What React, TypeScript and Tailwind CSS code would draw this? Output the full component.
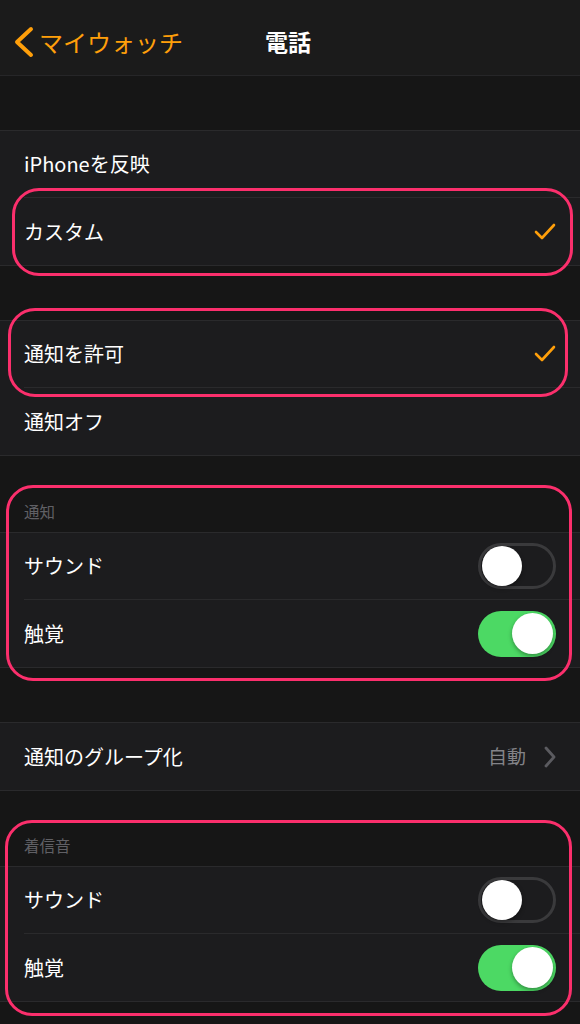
const font = { fontFamily: '"Noto Sans CJK JP", "Noto Sans", sans-serif' };

function Check() {
  return (
    <svg width="22" height="18" viewBox="0 0 22 18" fill="none">
      <polyline points="2,9 8,15 20,2" stroke="#ff9f0a" strokeWidth="2.6" strokeLinecap="round" strokeLinejoin="round" />
    </svg>
  );
}

function Toggle({ on }: { on: boolean }) {
  if (on) {
    return (
      <div className="flex h-[46px] w-[78px] items-center justify-end rounded-full bg-[#4cd964] px-[3px]">
        <div className="h-[41px] w-[41px] rounded-full bg-white shadow-[0_2px_4px_rgba(0,0,0,0.35)]" />
      </div>
    );
  }
  return (
    <div className="flex h-[46px] w-[78px] items-center justify-start rounded-full border-[3px] border-[#3a3a3c] px-[1px]">
      <div className="h-[40px] w-[40px] rounded-full bg-white shadow-[0_2px_4px_rgba(0,0,0,0.35)]" />
    </div>
  );
}

function Row({ label, right, last }: { label: string; right?: React.ReactNode; last?: boolean }) {
  return (
    <div className="pl-6">
      <div className={`flex h-[67px] items-center justify-between pr-6 ${last ? "" : "border-b border-[#2a2a2c]"}`}>
        <span className="text-[20px] text-white">{label}</span>
        {right}
      </div>
    </div>
  );
}

function Group({ children }: { children: React.ReactNode }) {
  return <div className="border-y border-[#2a2a2c] bg-[#1c1c1e]">{children}</div>;
}

function Header({ text, h }: { text: string; h: string }) {
  return (
    <div className={`flex items-end px-6 pb-[9px] ${h}`}>
      <span className="text-[15.5px] text-[#606065]">{text}</span>
    </div>
  );
}

function Outline({ className }: { className: string }) {
  return <div className={`absolute rounded-[27px] border-[3.5px] border-[#fb2f6c] ${className}`} />;
}

export default function App() {
  return (
    <div className="relative min-h-screen w-[580px] overflow-hidden bg-[#161616]" style={font}>
      <div className="relative flex h-[76px] items-center border-b border-[#262628] bg-[#1b1b1b] pt-[8px]">
        <div className="flex items-center pl-[13px]">
          <svg width="22" height="32" viewBox="0 0 22 32" fill="none">
            <polyline points="18,3 4,16 18,29" stroke="#ff9f0a" strokeWidth="4" strokeLinecap="round" strokeLinejoin="round" />
          </svg>
          <span className="ml-[4px] text-[24px] text-[#ff9f0a]">マイウォッチ</span>
        </div>
        <span className="absolute left-[265px] text-[23px] font-bold text-white">電話</span>
      </div>

      <div className="h-[54px]" />
      <Group>
        <Row label="iPhoneを反映" />
        <Row label="カスタム" right={<Check />} last />
      </Group>

      <div className="h-[54px]" />
      <Group>
        <Row label="通知を許可" right={<Check />} />
        <Row label="通知オフ" last />
      </Group>

      <Header text="通知" h="h-[76px]" />
      <Group>
        <Row label="サウンド" right={<Toggle on={false} />} />
        <Row label="触覚" right={<Toggle on />} last />
      </Group>

      <div className="h-[54px]" />
      <Group>
        <Row
          label="通知のグループ化"
          right={
            <div className="flex items-center gap-[18px]">
              <span className="text-[19px] text-[#838388]">自動</span>
              <svg width="12" height="22" viewBox="0 0 12 22" fill="none">
                <polyline points="2,2 10,11 2,20" stroke="#5b5b60" strokeWidth="2.8" strokeLinecap="round" strokeLinejoin="round" />
              </svg>
            </div>
          }
          last
        />
      </Group>

      <Header text="着信音" h="h-[75px]" />
      <Group>
        <Row label="サウンド" right={<Toggle on={false} />} />
        <Row label="触覚" right={<Toggle on />} last />
      </Group>

      <Outline className="left-[12px] top-[188px] h-[88px] w-[561px]" />
      <Outline className="left-[8px] top-[308px] h-[89px] w-[560px]" />
      <Outline className="left-[6px] top-[485px] h-[196px] w-[566px]" />
      <Outline className="left-[5px] top-[820px] h-[196px] w-[567px]" />
    </div>
  );
}
